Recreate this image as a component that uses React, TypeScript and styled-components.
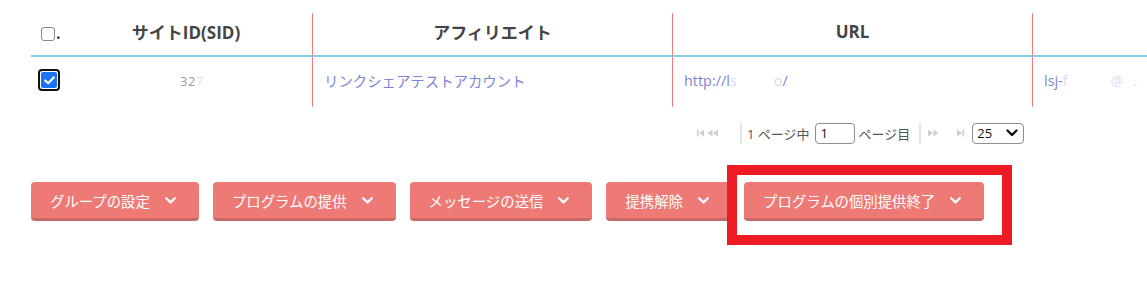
import React from "react";
import styled, { createGlobalStyle } from "styled-components";

const Global = createGlobalStyle`
  html, body { margin: 0; padding: 0; background: #fff; }
  body { font-family: "Open Sans", "Noto Sans CJK JP", sans-serif; overflow: hidden; }
`;

const Page = styled.div`
  width: 1147px;
  height: 282px;
  padding: 13px 0 0 31px;
  box-sizing: border-box;
  overflow: hidden;
`;

const Table = styled.div`
  display: grid;
  grid-template-columns: 29px 252px 360px 360px 1fr;
  width: 1116px;
`;

const HeadCell = styled.div<{ $divider?: boolean }>`
  height: 44px;
  display: flex;
  align-items: center;
  justify-content: center;
  padding-bottom: 5px;
  box-sizing: border-box;
  border-bottom: 2px solid #87cde9;
  border-left: ${(p) => (p.$divider ? "1px solid #f0807a" : "none")};
  font-size: 17px;
  font-weight: 700;
  color: #444;
  white-space: nowrap;
`;

const CheckHead = styled(HeadCell)`
  justify-content: flex-start;
  align-items: flex-start;
  padding: 12px 0 0 10px;
  font-weight: 400;
`;

const CheckLabel = styled.span`
  display: flex;
  align-items: flex-end;
  gap: 1px;
`;

const BodyCell = styled.div<{ $divider?: boolean; $center?: boolean }>`
  height: 50px;
  display: flex;
  align-items: center;
  justify-content: ${(p) => (p.$center ? "center" : "flex-start")};
  padding: 0 0 3px ${(p) => (p.$center ? "0" : "11px")};
  box-sizing: border-box;
  border-left: ${(p) => (p.$divider ? "1px solid #f0807a" : "none")};
  font-size: 14.4px;
  color: #7c85d6;
  white-space: nowrap;
  overflow: hidden;
`;

const CheckBody = styled(BodyCell)`
  padding: 12px 0 0 7px;
  align-items: flex-start;
`;

const EmptyBox = styled.span`
  display: inline-block;
  width: 12px;
  height: 12px;
  border: 1.5px solid #8a8a8a;
  border-radius: 3px;
  background: #fff;
`;

const Dot = styled.span`
  font-size: 16px;
  font-weight: 700;
  color: #444;
  line-height: 1;
`;

const FocusRing = styled.span`
  display: inline-flex;
  padding: 1px;
  border: 2px solid #111;
  border-radius: 4px;
  background: #fff;
`;

const CheckedBox = styled.span`
  display: inline-flex;
  align-items: center;
  justify-content: center;
  width: 16px;
  height: 16px;
  border-radius: 2px;
  background: #1a73f0;
`;

const Sid = styled.span`
  color: #9a9a9a;
  font-size: 13px;
  margin-left: 12px;
  letter-spacing: 0.5px;
`;

const Faded = styled.span`
  opacity: 0.3;
`;

const Gap = styled.span<{ $w: number }>`
  display: inline-block;
  width: ${(p) => p.$w}px;
`;

const Pager = styled.div`
  display: flex;
  align-items: center;
  margin: 15px 0 0 666px;
  height: 22px;
  font-size: 13px;
  color: #555;
  white-space: nowrap;
`;

const PagerIcons = styled.span`
  display: inline-flex;
  align-items: center;
  gap: 3px;
  color: #cfcfcf;
`;

const Sep = styled.span<{ $l: number; $r: number }>`
  display: inline-block;
  width: 2px;
  height: 21px;
  background: #e6e6e6;
  margin: 0 ${(p) => p.$r}px 0 ${(p) => p.$l}px;
`;

const PageInput = styled.input`
  width: 40px;
  height: 21px;
  box-sizing: border-box;
  border: 1px solid #8f8f8f;
  border-radius: 4px;
  font-family: "Open Sans", sans-serif;
  font-size: 13px;
  color: #111;
  padding: 0 5px;
  margin: 0 4px 0 5px;
  outline: none;
`;

const SelectBox = styled.div`
  display: inline-flex;
  align-items: center;
  justify-content: space-between;
  width: 52px;
  height: 21px;
  box-sizing: border-box;
  border: 1px solid #8f8f8f;
  border-radius: 4px;
  padding: 0 5px 0 4px;
  margin-left: 8px;
  font-size: 13px;
  color: #111;
`;

const Actions = styled.div`
  display: flex;
  gap: 14px;
  margin-top: 38px;
`;

const Button = styled.button`
  display: inline-flex;
  align-items: center;
  gap: 15px;
  height: 39px;
  padding: 0 23px 0 19px;
  box-sizing: border-box;
  border: none;
  border-bottom: 3px solid #c76a66;
  border-radius: 4px;
  background: #ee7a76;
  color: #fff;
  font-family: "Noto Sans CJK JP", sans-serif;
  font-size: 14.4px;
  white-space: nowrap;
  cursor: pointer;
`;

const Highlight = styled.div`
  position: relative;
  margin-left: -2px;
`;

const Marker = styled.span`
  position: absolute;
  left: -17px;
  top: -17px;
  width: 285px;
  height: 80px;
  box-sizing: border-box;
  border: 10px solid #ed1c24;
  pointer-events: none;
`;

const Chevron = () => (
  <svg width="11" height="7" viewBox="0 0 11 7">
    <polyline points="1.2,1.2 5.5,5.4 9.8,1.2" fill="none" stroke="#fff" strokeWidth="2.2" strokeLinecap="round" strokeLinejoin="round" />
  </svg>
);

const First = () => (
  <svg width="7" height="8" viewBox="0 0 7 8">
    <rect x="0" y="0.5" width="1.6" height="7" fill="currentColor" />
    <polygon points="7,0.5 2,4 7,7.5" fill="currentColor" />
  </svg>
);
const Prev = () => (
  <svg width="11" height="8" viewBox="0 0 11 8">
    <polygon points="5.5,0.5 0.5,4 5.5,7.5" fill="currentColor" />
    <polygon points="11,0.5 6,4 11,7.5" fill="currentColor" />
  </svg>
);
const Next = () => (
  <svg width="11" height="8" viewBox="0 0 11 8">
    <polygon points="0,0.5 5,4 0,7.5" fill="currentColor" />
    <polygon points="5.5,0.5 10.5,4 5.5,7.5" fill="currentColor" />
  </svg>
);
const Last = () => (
  <svg width="7" height="8" viewBox="0 0 7 8">
    <polygon points="0,0.5 5,4 0,7.5" fill="currentColor" />
    <rect x="5.4" y="0.5" width="1.6" height="7" fill="currentColor" />
  </svg>
);

const actions = ["グループの設定", "プログラムの提供", "メッセージの送信", "提携解除"];

export default function App() {
  return (
    <>
      <Global />
      <Page>
        <Table>
          <CheckHead>
            <CheckLabel>
              <EmptyBox />
              <Dot>.</Dot>
            </CheckLabel>
          </CheckHead>
          <HeadCell>サイトID(SID)</HeadCell>
          <HeadCell $divider>アフィリエイト</HeadCell>
          <HeadCell $divider>URL</HeadCell>
          <HeadCell $divider />

          <CheckBody>
            <FocusRing>
              <CheckedBox>
                <svg width="11" height="9" viewBox="0 0 11 9">
                  <polyline points="1.3,4.6 4.2,7.3 9.7,1.4" fill="none" stroke="#fff" strokeWidth="2.2" strokeLinecap="round" strokeLinejoin="round" />
                </svg>
              </CheckedBox>
            </FocusRing>
          </CheckBody>
          <BodyCell $center>
            <Sid>32<Faded>7</Faded></Sid>
          </BodyCell>
          <BodyCell $divider>リンクシェアテストアカウント</BodyCell>
          <BodyCell $divider>
            http://l<Faded>s</Faded>
            <Gap $w={37} />
            <Faded>o</Faded>/
          </BodyCell>
          <BodyCell $divider>
            lsj-<Faded>f</Faded>
            <Gap $w={43} />
            <Faded>@</Faded>
            <Gap $w={10} />
            <Faded>.</Faded>
          </BodyCell>
        </Table>

        <Pager>
          <PagerIcons>
            <First />
            <Prev />
          </PagerIcons>
          <Sep $l={22} $r={5} />
          1 ページ中
          <PageInput defaultValue="1" />
          ページ目
          <Sep $l={9} $r={7} />
          <PagerIcons>
            <Next />
            <Gap $w={12} />
            <Last />
          </PagerIcons>
          <SelectBox>
            <span>25</span>
            <svg width="12" height="8" viewBox="0 0 12 8">
              <polyline points="1.5,1.5 6,6 10.5,1.5" fill="none" stroke="#111" strokeWidth="2.4" strokeLinecap="round" strokeLinejoin="round" />
            </svg>
          </SelectBox>
        </Pager>

        <Actions>
          {actions.map((a) => (
            <Button key={a}>
              {a}
              <Chevron />
            </Button>
          ))}
          <Highlight>
            <Button>
              プログラムの個別提供終了
              <Chevron />
            </Button>
            <Marker />
          </Highlight>
        </Actions>
      </Page>
    </>
  );
}
